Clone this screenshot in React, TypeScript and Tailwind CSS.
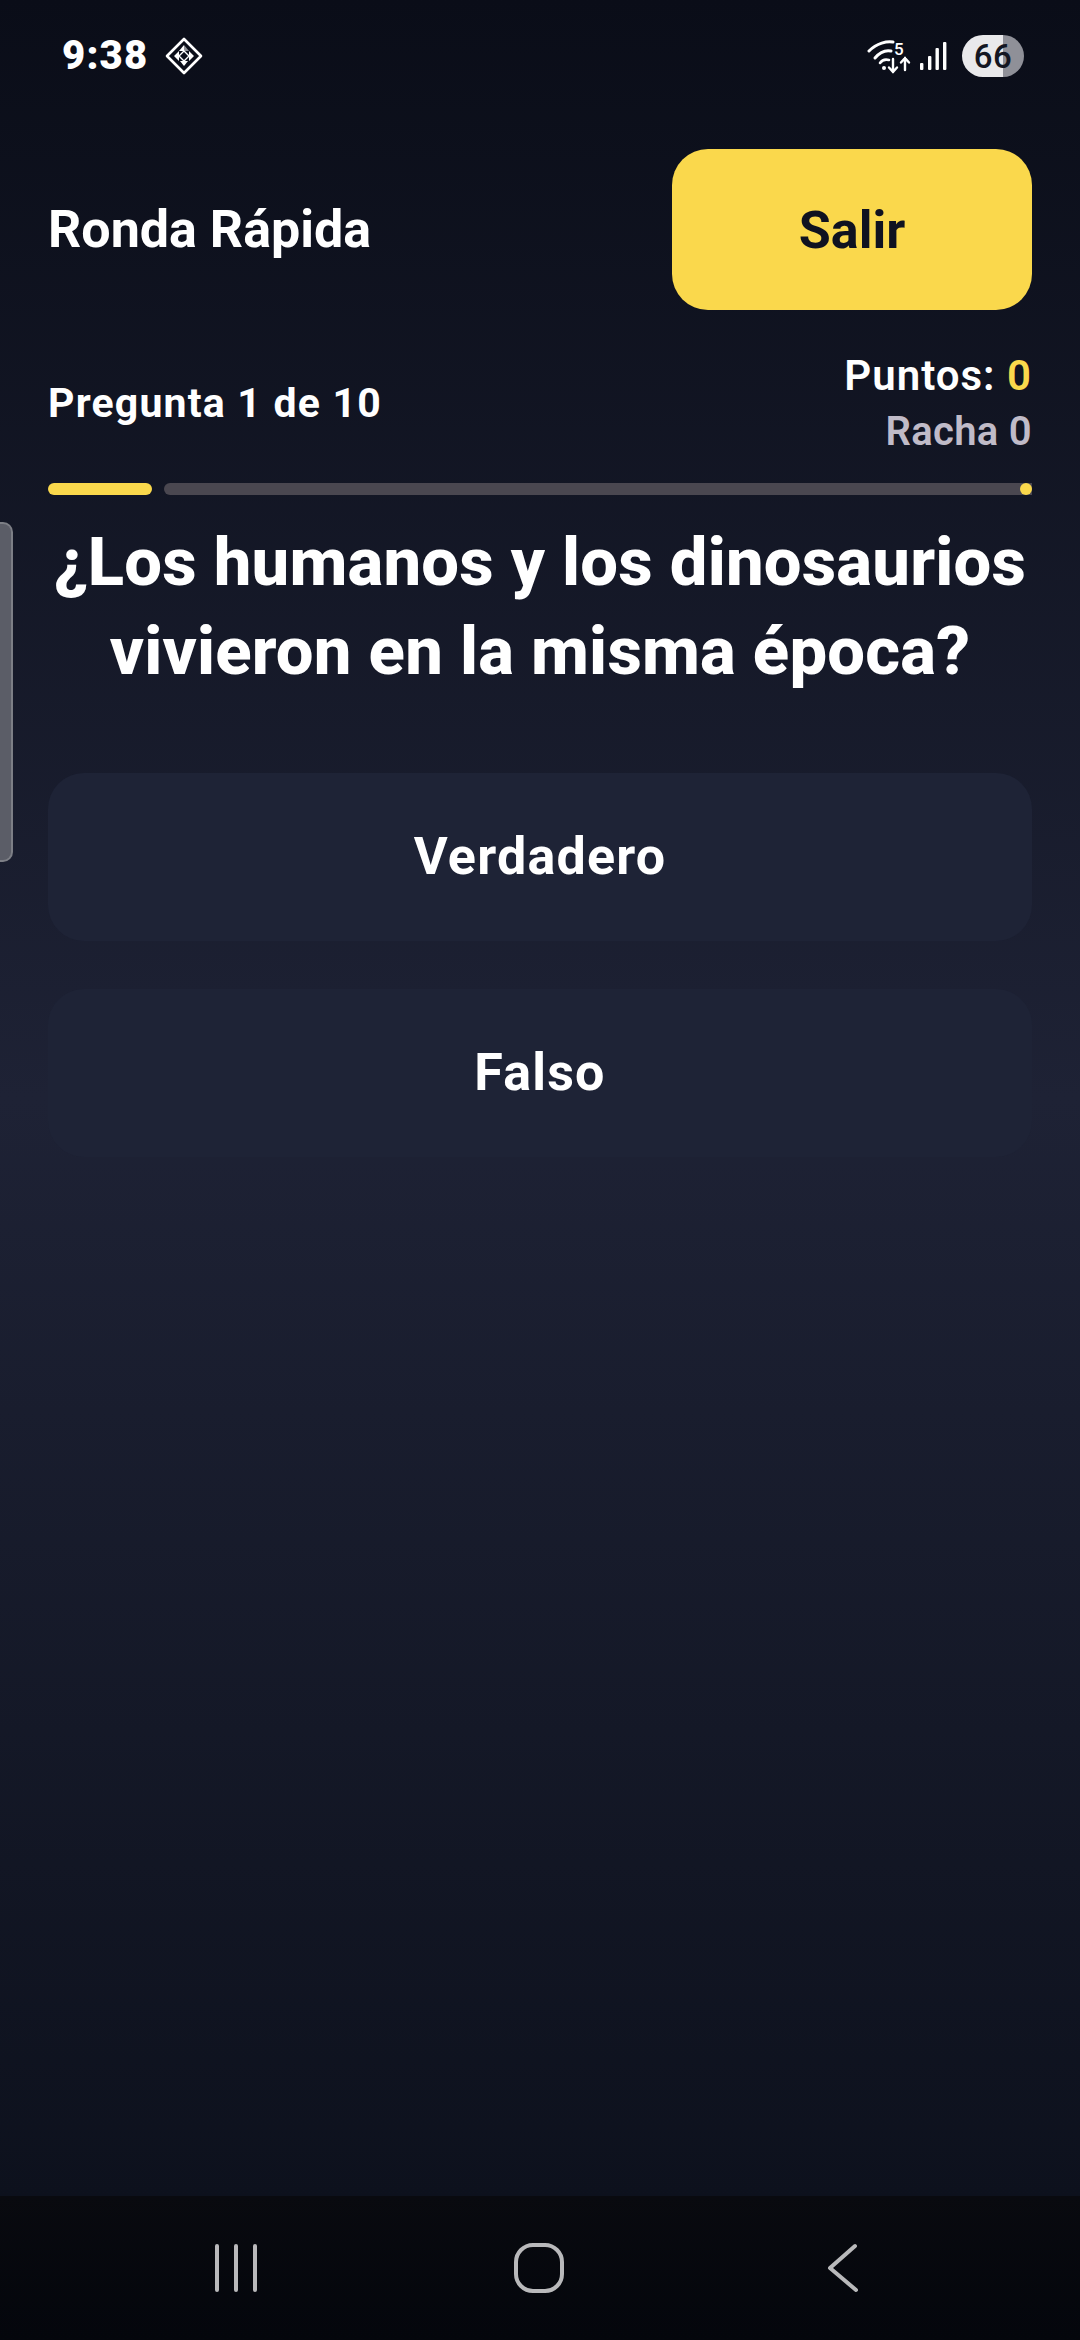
import React from 'react'

const DiamondIcon = () => (
  <svg width="38" height="38" viewBox="0 0 38 38" className="ml-[17px]">
    <path d="M19 2 L36 19 L19 36 L2 19 Z" fill="none" stroke="white" strokeWidth="2.6" strokeLinejoin="round" />
    <path d="M19 8 L19 14 L14 14 Z" fill="white" />
    <path d="M19 14 L24 14 L19 8 Z" fill="white" opacity="0.55" />
    <path d="M9 19 L14 14 L14 19 Z M24 14 L29 19 L24 19 Z M14 19 L14 24 L9 19 Z M24 19 L24 24 L29 19 Z" fill="white" />
    <path d="M19 14 L24 19 L19 24 L14 19 Z" fill="none" stroke="white" strokeWidth="1.4" />
    <path d="M15 24 L23 24 L19 29 Z" fill="white" />
  </svg>
)

const WifiIcon = () => (
  <svg width="46" height="36" viewBox="0 0 46 36" fill="none" stroke="white" strokeLinecap="round">
    <path d="M2 13 C10 5 20 3 26 4" strokeWidth="3" />
    <path d="M8 20 C13 14 19 12 24 13" strokeWidth="3" />
    <path d="M13 25 C15 22 18 21 22 22" strokeWidth="2.6" />
    <circle cx="17" cy="30" r="2" fill="white" stroke="none" />
    <text x="27" y="17" fill="white" stroke="none" fontSize="17" fontWeight="500" fontFamily="Roboto, sans-serif">5</text>
    <path d="M26 21 V34 M22 29.5 L26 34 L30 29.5" strokeWidth="2.4" />
    <path d="M38 32 V20 M34 24.5 L38 20 L42 24.5" strokeWidth="2.4" />
  </svg>
)

const SignalIcon = () => (
  <svg width="28" height="28" viewBox="0 0 28 28" fill="white">
    <rect x="0" y="21" width="3.4" height="7" rx="1" />
    <rect x="8" y="14" width="3.4" height="14" rx="1" />
    <rect x="15.5" y="6" width="3.4" height="22" rx="1" />
    <rect x="23" y="0" width="3.4" height="28" rx="1" />
  </svg>
)

const StatusBar = () => (
  <div className="flex h-[112px] items-center justify-between pl-[62px] pr-[56px]">
    <div className="flex items-center">
      <span className="font-['Roboto',sans-serif] text-[40px] font-black leading-none tracking-[1.2px] text-white">9:38</span>
      <DiamondIcon />
    </div>
    <div className="flex items-center">
      <WifiIcon />
      <div className="ml-[7px]"><SignalIcon /></div>
      <div className="ml-[14px] flex h-[42px] w-[62px] items-center justify-center rounded-full bg-linear-to-r from-[#e9e9eb] from-[66%] to-[#8f9098] to-[66%] font-['Roboto',sans-serif] text-[33px] font-medium leading-none tracking-[0.5px] text-[#131622]">
        66
      </div>
    </div>
  </div>
)

const AnswerCard = ({ label }: { label: string }) => (
  <button className="flex h-[168px] w-full items-center justify-center rounded-[36px] bg-[#1e2336] text-[52px] font-bold tracking-[1.2px] text-white">
    {label}
  </button>
)

const NavBar = () => (
  <div className="flex h-[144px] items-start bg-linear-to-b from-[#090a0f] to-[#04060c] pl-[215px] pt-[47px]">
    <svg width="42" height="50" viewBox="0 0 42 50" fill="none" stroke="#b9b9bb" strokeWidth="4" strokeLinecap="round">
      <path d="M2 3 V47 M21 3 V47 M40 3 V47" />
    </svg>
    <svg width="50" height="50" viewBox="0 0 50 50" fill="none" stroke="#b9b9bb" strokeWidth="4" className="ml-[257px]">
      <rect x="2" y="2" width="46" height="46" rx="17" />
    </svg>
    <svg width="32" height="50" viewBox="0 0 32 50" fill="none" stroke="#b9b9bb" strokeWidth="4" strokeLinecap="round" strokeLinejoin="round" className="ml-[263px]">
      <path d="M28 3 L3 25 L29 47" />
    </svg>
  </div>
)

export default function App() {
  return (
    <div className="relative flex h-[2340px] w-[1080px] flex-col overflow-hidden bg-[#0a0d18] font-['Roboto',sans-serif] text-white">
      <div className="flex flex-1 flex-col bg-linear-to-b from-[#0a0d18] via-[#1e2235] to-[#0d111d]">
        <StatusBar />

        <div className="px-[48px]">
          <div className="mt-[37px] flex items-center justify-between">
            <h1 className="text-[52px] font-bold leading-none">Ronda Rápida</h1>
            <button className="flex h-[161px] w-[360px] items-center justify-center rounded-[36px] bg-[#fad84c] pt-[2px] text-[52px] font-bold text-[#0f1220]">
              Salir
            </button>
          </div>

          <div className="mt-[38px] flex items-center justify-between">
            <span className="-translate-y-px text-[41px] font-bold leading-none tracking-[1.2px]">Pregunta 1 de 10</span>
            <div className="flex flex-col items-end">
              <span className="text-[42px] font-semibold leading-[56px] tracking-[1px]">
                Puntos: <span className="text-[#fad84c]">0</span>
              </span>
              <span className="text-[40px] font-semibold leading-[56px] tracking-[0.3px] text-[#c0bbc8]">Racha 0</span>
            </div>
          </div>

          <div className="mt-[23px] flex h-[12px] items-center gap-[12px]">
            <div className="h-full w-[104px] rounded-full bg-[#fad84c]" />
            <div className="relative h-full flex-1 rounded-l-full bg-[#4a4750]">
              <div className="absolute right-0 top-0 size-[12px] rounded-full bg-[#fad84c]" />
            </div>
          </div>

          <h2 className="mt-[23px] text-center text-[67px] font-extrabold leading-[89px] tracking-[0.2px]">
            ¿Los humanos y los dinosaurios
            <br />
            vivieron en la misma época?
          </h2>

          <div className="mt-[77px] flex flex-col gap-[48px]">
            <AnswerCard label="Verdadero" />
            <AnswerCard label="Falso" />
          </div>
        </div>
      </div>

      <NavBar />

      {/* edge panel handle */}
      <div className="absolute left-0 top-[522px] h-[340px] w-[13px] rounded-r-[10px] border-2 border-l-0 border-[#7d7f86] bg-[#5b5d67]" />
    </div>
  )
}
